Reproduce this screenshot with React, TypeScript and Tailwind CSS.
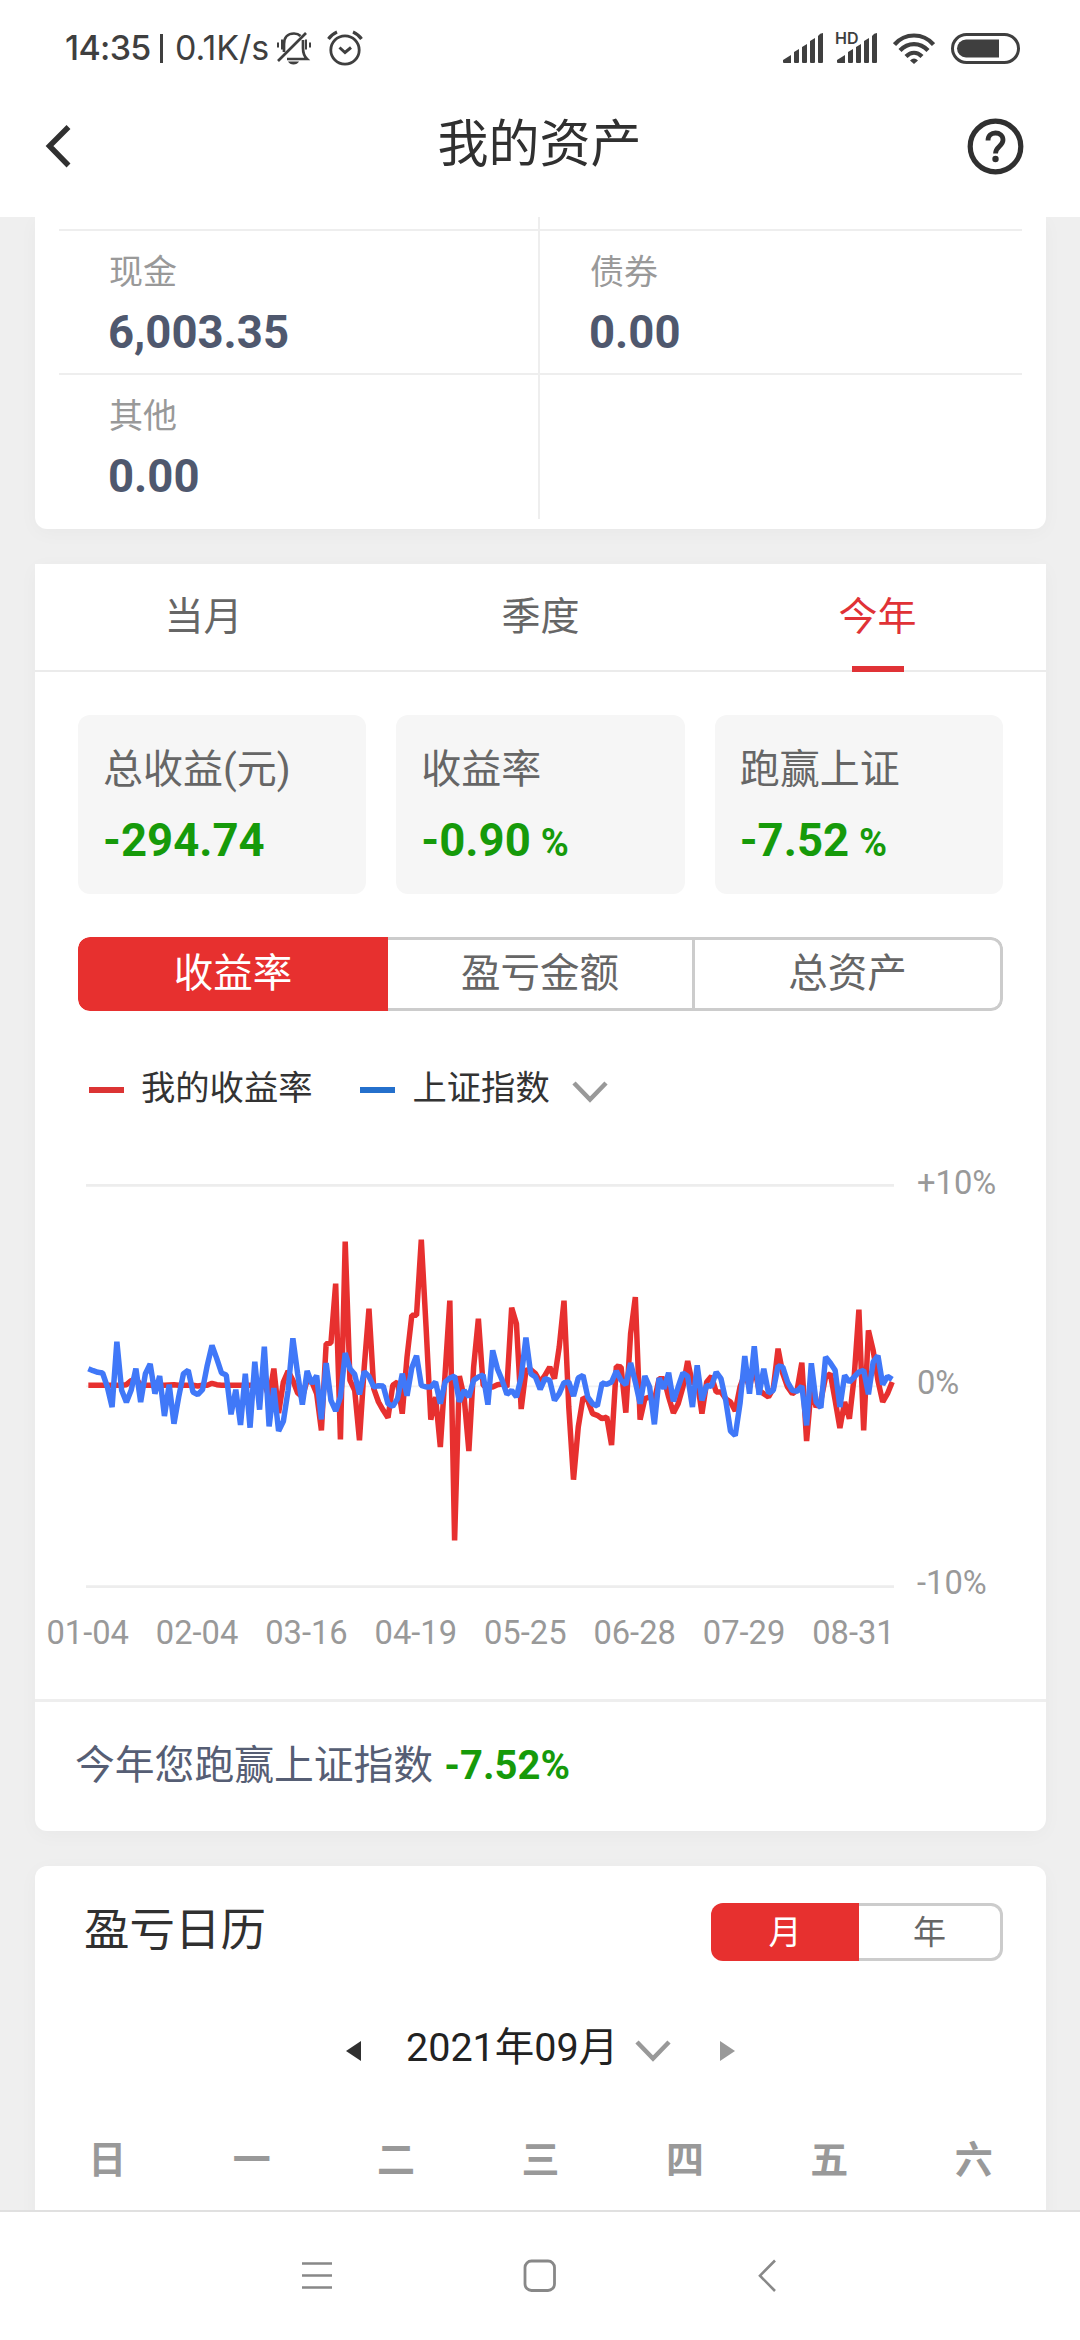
import React, { useState } from 'react';

interface Stat {
    label: string;
    value: string;
    percent?: boolean;
}

const STATS: Stat[] = [
    { label: '总收益(元)', value: '-294.74' },
    { label: '收益率', value: '-0.90', percent: true },
    { label: '跑赢上证', value: '-7.52', percent: true },
];

const PERIODS = ['当月', '季度', '今年'];
const METRICS = ['收益率', '盈亏金额', '总资产'];
const DATES = ['01-04', '02-04', '03-16', '04-19', '05-25', '06-28', '07-29', '08-31'];
const WEEKDAYS = ['日', '一', '二', '三', '四', '五', '六'];

// Daily series in chart units: 0% sits at 555, one percent is 60 units
const MY_RETURN = [
    555, 555, 555, 555, 555, 555, 555, 555, 553, 541, 535, 553, 555, 555, 555, 555, 555, 554, 553, 555,
    555, 555, 555, 557, 555, 555, 549, 553, 555, 555, 555, 555, 555, 555, 555, 555, 560, 550, 590, 505,
    638, 545, 512, 540, 578, 590, 540, 545, 580, 690, 430, 428, 250, 717, 124, 540, 570, 720, 500, 325,
    565, 605, 630, 652, 555, 545, 640, 470, 345, 345, 118, 380, 658, 590, 740, 520, 301, 1020, 527, 590,
    752, 500, 355, 555, 560, 560, 553, 551, 560, 322, 370, 626, 510, 508, 520, 545, 525, 500, 535, 440,
    301, 620, 838, 680, 592, 600, 640, 645, 655, 650, 734, 498, 500, 637, 400, 290, 658, 595, 590, 600,
    535, 535, 590, 638, 610, 560, 482, 550, 540, 640, 545, 528, 575, 575, 595, 605, 632, 560, 520, 560,
    500, 570, 580, 590, 565, 445, 520, 560, 580, 570, 487, 722, 560, 620, 600, 530, 520, 600, 683, 605,
    655, 530, 328, 690, 390, 450, 540, 605, 580, 545,
];

const INDEX_RETURN = [
    505, 511, 516, 518, 560, 620, 424, 570, 606, 570, 505, 605, 520, 491, 580, 527, 647, 553, 670, 590,
    520, 510, 575, 583, 568, 495, 435, 475, 518, 524, 642, 568, 674, 520, 682, 484, 628, 439, 678, 563,
    692, 663, 570, 414, 520, 613, 512, 550, 526, 657, 488, 600, 632, 590, 458, 505, 522, 582, 514, 528,
    560, 556, 557, 610, 618, 595, 520, 586, 502, 466, 555, 560, 560, 545, 610, 545, 533, 527, 604, 570,
    590, 540, 530, 524, 613, 450, 505, 540, 582, 570, 590, 530, 412, 520, 530, 567, 535, 540, 600, 580,
    547, 545, 587, 533, 525, 590, 610, 617, 548, 552, 545, 512, 540, 553, 488, 545, 610, 527, 560, 672,
    533, 565, 517, 603, 560, 518, 528, 620, 495, 600, 555, 558, 515, 535, 600, 692, 706, 610, 467, 580,
    438, 583, 505, 578, 570, 497, 500, 545, 570, 573, 557, 675, 489, 605, 622, 470, 488, 510, 620, 525,
    545, 530, 515, 510, 582, 485, 466, 553, 528, 537,
];

const toPoints = (series: number[]) => series.map((y, i) => `${(7 + i * 14.27).toFixed(1)},${y}`).join(' ');

const StatusBar = () => (
    <div className="flex h-24 items-center pl-[65px] pr-[60px] text-[#3f3f3f]">
        <span className="w-[95px] font-[Inter] text-[34px] leading-none font-medium tracking-[-0.7px]">14:35</span>
        <span className="h-[29px] w-[3px] bg-[#3f3f3f]" />
        <span className="ml-[12px] w-[101px] font-[Inter] text-[34px] leading-none whitespace-nowrap">0.1K/s</span>
        <svg className="h-[34px] w-[36px]" viewBox="0 0 36 34" fill="none" stroke="currentColor" strokeWidth="2.7">
            <path d="M8 21V13C8 6 12 2.5 18 2.5c3 0 5 1 6.500 2.500M27 9v8c0 5 1 8 4 11H11" />
            <path d="M2 30L30 2" />
            <path d="M2 11.500v5M6 8.500v10M30 8.500v10M34 11.500v5" strokeWidth="2" />
            <path d="M12 30.500h11c-1 2-3 3-5.500 3s-4.500-1-5.500-3z" fill="currentColor" stroke="none" />
        </svg>
        <svg className="ml-[15px] h-[36px] w-[36px]" viewBox="0 0 36 36" fill="none" stroke="currentColor" strokeWidth="2.8">
            <circle cx="18" cy="20" r="14.200" />
            <path d="M12.500 17.500l5.500 5 6-5" strokeWidth="3" />
            <path d="M1.500 9c2-3 5-5.500 8.500-7M34.500 9c-2-3-5-5.500-8.500-7" strokeWidth="3.200" />
        </svg>
        <svg className="ml-auto h-[30px] w-[41px]" viewBox="0 0 41 30" fill="currentColor">
            <path d="M0 27l8-5v8H1q-1 0-1-1zM11 19l5-3v13q0 1-1 1h-3q-1 0-1-1zM19 14l5-3v18q0 1-1 1h-3q-1 0-1-1zM27 8l5-3v24q0 1-1 1h-3q-1 0-1-1zM35 3q2-3 5-3v29q0 1-1 1h-3q-1 0-1-1z" />
        </svg>
        <div className="relative ml-[13px] h-[30px] w-[41px]">
            <svg className="h-[30px] w-[41px]" viewBox="0 0 41 30" fill="currentColor">
                <path d="M0 27l8-5v8H1q-1 0-1-1zM11 19l5-3v13q0 1-1 1h-3q-1 0-1-1zM19 14l5-3v18q0 1-1 1h-3q-1 0-1-1zM27 8l5-3v24q0 1-1 1h-3q-1 0-1-1zM35 3q2-3 5-3v29q0 1-1 1h-3q-1 0-1-1z" />
            </svg>
            <span className="absolute top-[-3px] left-[-2px] font-[Inter] text-[16px] leading-none font-semibold">HD</span>
        </div>
        <svg className="ml-[15px] h-[31px] w-[42px]" viewBox="0 0 42 31" fill="none" stroke="currentColor" strokeWidth="4.200">
            <path d="M1.500 11.500C12-.5 30-.5 40.500 11.500M7 17.500c8-8.500 20-8.500 28 0M13 23.500c5-5 11-5 16 0" />
            <path d="M17 27.500q4-4 8 0l-4 3.500z" fill="currentColor" stroke="none" />
        </svg>
        <svg className="ml-[16px] h-[31px] w-[69px]" viewBox="0 0 69 31">
            <rect x="1.500" y="1.500" width="66" height="28" rx="14" fill="none" stroke="currentColor" strokeWidth="3" />
            <path d="M15 6.500h33v18H15a9 9 0 010-18z" fill="currentColor" />
        </svg>
    </div>
);

const Header = () => (
    <div className="flex h-[121px] items-start justify-between pr-[56px] pl-[45px] text-[#303030]">
        <svg className="mt-[28px] h-[44px] w-[67px]" viewBox="0 0 67 44" fill="none" stroke="currentColor" strokeWidth="5.500">
            <path d="M23.500 3L4.500 22l19 19.500" />
        </svg>
        <h1 className="mt-[23px] text-[51px] leading-[51px]">我的资产</h1>
        <svg className="mt-[22px] h-[57px] w-[57px]" viewBox="0 0 57 57" fill="none" stroke="currentColor">
            <circle cx="28.500" cy="28.500" r="25.300" strokeWidth="5.200" />
            <path d="M21 22.500c0-5 3.500-7.500 7.500-7.500s7.500 2.500 7.500 7c0 6-7.500 6.500-7.500 13.500" strokeWidth="4.800" />
            <circle cx="28.500" cy="41" r="3.200" fill="currentColor" stroke="none" />
        </svg>
    </div>
);

const AssetCell: React.FC<{ label: string; value: string }> = ({ label, value }) => (
    <div className="flex-1 pl-[50px]">
        <p className="pt-[21px] text-[34px] leading-[40px] text-[#999]">{label}</p>
        <p className="mt-[17px] -ml-px text-[45.5px] leading-[48px] font-bold text-[#4f586e]">{value}</p>
    </div>
);

const Chevron: React.FC<{ className: string }> = ({ className }) => (
    <svg className={className} viewBox="0 0 36 22" fill="none" stroke="#999" strokeWidth="4.500">
        <path d="M2 2L18 18.500 34 2" />
    </svg>
);

const ReturnChart = () => (
    <div className="mt-[53px]">
        <div className="flex h-[440px] pl-[51px]">
            <svg className="mt-[18px] h-[410px] w-[810px]" viewBox="0 -52 2430 1230" fill="none">
                <path d="M0 -45H2424M0 1159H2424" stroke="#ededed" strokeWidth="8" />
                <path d="M0 558H2424" stroke="#f2f2f2" strokeWidth="5" />
                <polyline points={toPoints(MY_RETURN)} stroke="#e7302f" strokeWidth="16.500" strokeLinejoin="bevel" />
                <polyline points={toPoints(INDEX_RETURN)} stroke="#4078f8" strokeWidth="16.500" strokeLinejoin="bevel" />
            </svg>
            <div className="ml-[21px] flex h-[436px] flex-col justify-between text-[32.7px] leading-[36px] text-[#999]">
                <span>+10%</span>
                <span>0%</span>
                <span>-10%</span>
            </div>
        </div>
        <div className="-ml-[2px] flex pt-[8px] text-[32.7px] leading-[40px] text-[#999]">
            {DATES.map(date => (
                <span key={date} className="w-[109.4px] shrink-0 text-center">{date}</span>
            ))}
        </div>
    </div>
);

const App: React.FC = () => {
    const [period, setPeriod] = useState(2);
    const [metric, setMetric] = useState(0);

    return (
        <div className="flex h-[2340px] w-[1080px] flex-col overflow-hidden bg-[#efefef] font-[Roboto,'Noto_Sans_CJK_SC',sans-serif]">
            <header className="h-[217px] shrink-0 bg-white">
                <StatusBar />
                <Header />
            </header>

            <main className="flex h-[1993px] shrink-0 flex-col overflow-hidden pr-[34px] pl-[35px]">
                {/* Asset breakdown */}
                <section className="h-[312px] shrink-0 rounded-b-xl bg-white px-[24px] shadow-[0_4px_20px_rgba(0,0,0,0.03)]">
                    <div className="flex h-[14px] border-b-2 border-[#eee]">
                        <div className="w-[481px] border-r-2 border-[#eee]" />
                    </div>
                    <div className="flex h-[144px] border-b-2 border-[#eee]">
                        <div className="flex w-[481px] border-r-2 border-[#eee]">
                            <AssetCell label="现金" value="6,003.35" />
                        </div>
                        <AssetCell label="债券" value="0.00" />
                    </div>
                    <div className="flex h-[144px]">
                        <div className="flex w-[481px] border-r-2 border-[#eee]">
                            <AssetCell label="其他" value="0.00" />
                        </div>
                    </div>
                </section>

                {/* Performance */}
                <section className="mt-[35px] h-[1267px] shrink-0 rounded-b-xl bg-white shadow-[0_4px_20px_rgba(0,0,0,0.03)]">
                    <div className="flex h-[108px] border-b-2 border-[#ebebeb]">
                        {PERIODS.map((name, i) => (
                            <button
                                key={name}
                                onClick={() => setPeriod(i)}
                                className={`relative flex-1 text-[39px] leading-none ${i === period ? 'text-[#e03236]' : 'text-[#666]'}`}
                            >
                                {name}
                                {i === period && <span className="absolute bottom-[-2px] left-1/2 h-[6px] w-[52px] -translate-x-1/2 bg-[#e03236]" />}
                            </button>
                        ))}
                    </div>

                    <div className="mt-[43px] flex gap-[30px] px-[43px]">
                        {STATS.map(stat => (
                            <div key={stat.label} className="h-[179px] flex-1 rounded-xl bg-[#f6f6f6] pl-[25px]">
                                <p className="pt-[31px] text-[40px] leading-[48px] text-[#666]">{stat.label}</p>
                                <p className="mt-[23px] text-[45.5px] leading-[48px] font-bold text-[#169a0a]">
                                    {stat.value}
                                    {stat.percent && <span className="ml-[10px] text-[38px]">%</span>}
                                </p>
                            </div>
                        ))}
                    </div>

                    <div className="mx-[43px] mt-[43px] flex h-[74px] overflow-hidden rounded-xl">
                        {METRICS.map((name, i) => (
                            <button
                                key={name}
                                onClick={() => setMetric(i)}
                                className={`text-[39.5px] leading-none ${i === 0 ? 'w-[310px] rounded-l-xl' : i === 1 ? 'w-[307px]' : 'w-[308px] rounded-r-xl border-r-[3px]'} ${
                                    i === metric ? 'bg-[#e7302f] text-white' : 'border-y-[3px] border-[#ccc] text-[#666]'
                                } ${i === 1 ? 'border-r-[3px]' : ''}`}
                            >
                                {name}
                            </button>
                        ))}
                    </div>

                    <div className="mt-[53px] flex h-[48px] items-center pl-[54px] text-[34.3px] leading-[48px] text-[#333]">
                        <span className="mt-[4px] h-[6px] w-[35px] bg-[#dc3434]" />
                        <span className="ml-[17px]">我的收益率</span>
                        <span className="mt-[4px] ml-[47px] h-[6px] w-[35px] bg-[#2470cc]" />
                        <span className="ml-[18px]">上证指数</span>
                        <Chevron className="mt-[7px] ml-[22px] h-[22px] w-[36px]" />
                    </div>

                    <ReturnChart />

                    <div className="mt-[46px] flex h-[130px] items-center border-t-[3px] border-[#eee] pl-[40px] text-[39.8px] leading-none text-[#565e74]">
                        <span>今年您跑赢上证指数</span>
                        <span className="ml-[11px] text-[40px] font-bold text-[#169a0a]">-7.52%</span>
                    </div>
                </section>

                {/* Profit calendar */}
                <section className="mt-[35px] h-[500px] shrink-0 rounded-t-xl bg-white shadow-[0_4px_20px_rgba(0,0,0,0.03)]">
                    <div className="flex h-[95px] items-end justify-between pr-[43px] pl-[49px]">
                        <h2 className="mb-[6px] text-[45.5px] leading-[48px] text-[#303030]">盈亏日历</h2>
                        <div className="flex h-[58px] w-[292px] text-[33px] leading-none">
                            <button className="w-[148px] rounded-l-xl bg-[#e7302f] text-white">月</button>
                            <button className="flex-1 rounded-r-xl border-[3px] border-l-0 border-[#ccc] text-[#666]">年</button>
                        </div>
                    </div>

                    <div className="mt-[63px] flex h-[48px] items-center pl-[311px] text-[39.5px] leading-[48px] text-[#222]">
                        <svg className="mt-[6px] h-[20px] w-[15px]" viewBox="0 0 15 20" fill="#303030">
                            <path d="M15 0v20L0 10z" />
                        </svg>
                        <span className="ml-[45px] w-[211px] whitespace-nowrap">2021年09月</span>
                        <Chevron className="mt-[6px] ml-[18px] h-[22px] w-[36px]" />
                        <svg className="mt-[6px] ml-[49px] h-[20px] w-[15px]" viewBox="0 0 15 20" fill="#999">
                            <path d="M0 0l15 10L0 20z" />
                        </svg>
                    </div>

                    <div className="mt-[63px] flex text-[38px] leading-[50px] font-bold text-[#999]">
                        {WEEKDAYS.map(day => (
                            <span key={day} className="flex-1 text-center">{day}</span>
                        ))}
                    </div>
                </section>
            </main>

            <nav className="flex h-[130px] shrink-0 border-t-2 border-[#e0e0e0] bg-white pt-[47px] pl-[301px]">
                <svg className="h-[34px] w-[32px]" viewBox="0 0 32 34" stroke="#888" strokeWidth="2.600">
                    <path d="M1 4.500h30M1 16.500h30M1 28.500h30" />
                </svg>
                <svg className="ml-[190px] h-[34px] w-[34px]" viewBox="0 0 34 34" fill="none" stroke="#888" strokeWidth="2.800">
                    <rect x="2" y="2" width="29.500" height="29.500" rx="6.500" />
                </svg>
                <svg className="ml-[200px] h-[34px] w-[20px]" viewBox="0 0 20 34" fill="none" stroke="#888" strokeWidth="2.600">
                    <path d="M18 1.500L3 16.700 18 32" />
                </svg>
            </nav>
        </div>
    );
};

export default App;
